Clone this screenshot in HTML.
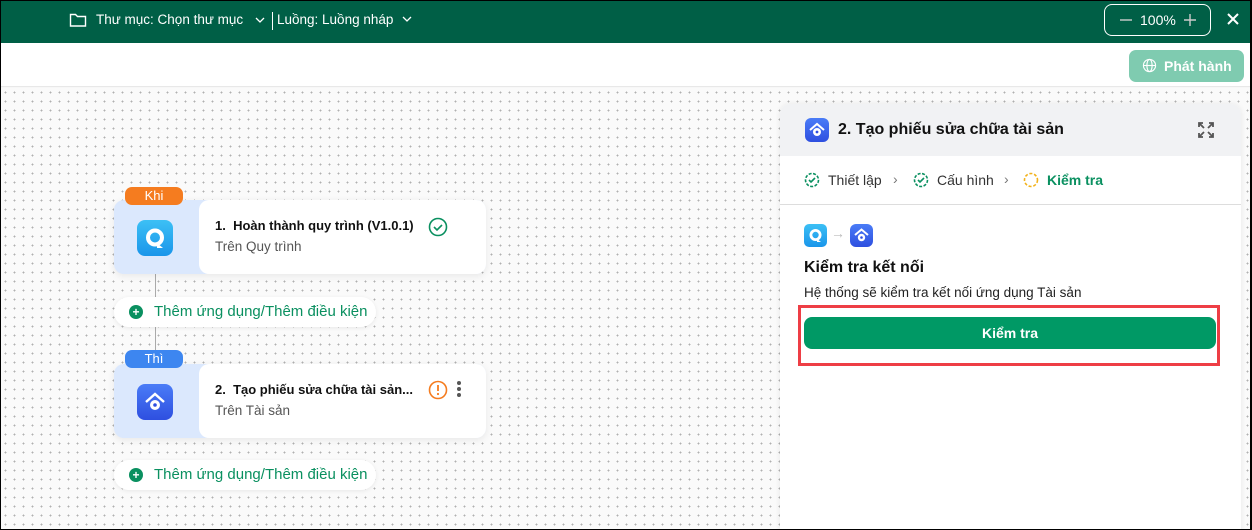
<!DOCTYPE html>
<html><head><meta charset="utf-8"><style>
*{box-sizing:border-box;margin:0;padding:0}
body{width:1252px;height:530px;overflow:hidden;font-family:"Liberation Sans",sans-serif;background:#000;position:relative}
.frame{position:absolute;left:1px;top:1px;width:1249px;height:528px;background:#f7f7f7;overflow:hidden}
.hdr{position:absolute;left:0;top:0;width:100%;height:42px;background:#005f46;color:#fff;font-size:13.5px}
.bar{position:absolute;left:0;top:42px;width:100%;height:44px;background:#fff;border-bottom:1px solid #e8e8e8}
.canvas{position:absolute;left:0;top:87px;width:100%;height:450px;background-color:#fafafa;background-image:radial-gradient(#b0b0b0 0.8px,transparent 1px);background-size:9px 9px}
.abs{position:absolute}
.card{position:absolute;left:113px;width:372px;height:74px;border-radius:10px;background:#dbe8fd;box-shadow:0 2px 8px rgba(0,0,0,.08)}
.card .w{position:absolute;left:85px;top:0;right:0;bottom:0;background:#fff;border-radius:10px}
.tag{position:absolute;left:124px;width:58px;height:18px;border-radius:7px;color:#fff;font-size:13px;text-align:center;line-height:18px}
.add{position:absolute;left:113px;width:262px;height:30px;border-radius:15px;background:#fff;box-shadow:0 1px 4px rgba(0,0,0,.08);color:#0a9060;font-size:15px;line-height:30px;padding-left:40px}
.add i{position:absolute;left:15px;top:8px;width:14px;height:14px;border-radius:50%;background:#0a9060;color:#fff;font-style:normal;font-size:12px;line-height:14px;text-align:center;font-weight:bold}
.t1{font-size:13px;font-weight:bold;color:#111}
.t2{font-size:13.5px;color:#555}
</style></head><body><div class="frame">
<div class="hdr">
<svg class="abs" style="left:68px;top:11px" width="18" height="16" viewBox="0 0 18 16"><path d="M1.5 2.5h5l2 2h8v9.5h-15z" fill="none" stroke="#fff" stroke-width="1.4"/></svg>
<div class="abs" style="left:95px;top:11px">Thư mục: Chọn thư mục</div>
<svg class="abs" style="left:254px;top:16px" width="10" height="7"><path d="M1 1l4 4 4-4" fill="none" stroke="#fff" stroke-width="1.3"/></svg>
<div class="abs" style="left:271px;top:11px;width:1px;height:18px;background:#fff"></div>
<div class="abs" style="left:276px;top:11px">Luồng: Luồng nháp</div>
<svg class="abs" style="left:401px;top:15px" width="10" height="7"><path d="M1 1l4 4 4-4" fill="none" stroke="#fff" stroke-width="1.3"/></svg>
<div class="abs" style="left:1103px;top:3px;width:107px;height:32px;border:1px solid #fff;border-radius:8px"></div>
<svg class="abs" style="left:1119px;top:18px" width="12" height="2"><path d="M0 1h12" stroke="#ccc" stroke-width="1.4"/></svg>
<div class="abs" style="left:1139px;top:11px;font-size:14px">100%</div>
<svg class="abs" style="left:1183px;top:13px" width="12" height="12"><path d="M0 6h12M6 0v12" stroke="#ccc" stroke-width="1.4"/></svg>
<svg class="abs" style="left:1226px;top:12px" width="12" height="12"><path d="M1 1l10 10M11 1L1 11" stroke="#fff" stroke-width="2"/></svg>
</div>
<div class="bar">
<div class="abs" style="left:1128px;top:7px;width:115px;height:32px;border-radius:7px;background:#7fcbb0;color:#fff;font-weight:bold;font-size:14px;line-height:32px;padding-left:35px">Phát hành</div>
<svg class="abs" style="left:1141px;top:15px" width="15" height="15" viewBox="0 0 16 16"><g fill="none" stroke="#fff" stroke-width="1.2"><circle cx="8" cy="8" r="6.5"/><ellipse cx="8" cy="8" rx="2.8" ry="6.5"/><path d="M1.5 8h13"/></g></svg>
</div>
<div class="canvas"></div>
<div class="abs" style="left:154px;top:270px;width:1px;height:100px;background:#aaa"></div>
<div class="card" style="top:199px"><div class="w"></div>
<div class="abs" style="left:23px;top:20px;width:36px;height:36px;border-radius:8px;background:linear-gradient(#3cc0f5,#1a95ea)"><svg class="abs" style="left:7px;top:7px" width="22" height="22"><circle cx="11" cy="10.5" r="7" fill="none" stroke="#fff" stroke-width="4"/><path d="M13 16l6 5h-6z" fill="#fff"/></svg></div>
<div class="abs t1" style="left:101px;top:18px">1.&nbsp; Hoàn thành quy trình (V1.0.1)</div>
<div class="abs t2" style="left:101px;top:39px">Trên Quy trình</div>
<svg class="abs" style="left:314px;top:17px" width="20" height="20"><circle cx="10" cy="10" r="8.5" fill="none" stroke="#0a9060" stroke-width="1.6"/><path d="M6 10l3 3 5-5" fill="none" stroke="#0a9060" stroke-width="1.6"/></svg>
</div>
<div class="tag" style="top:186px;background:#f57c1f">Khi</div>
<div class="add" style="top:296px"><i>+</i>Thêm ứng dụng/Thêm điều kiện</div>
<div class="card" style="top:363px"><div class="w"></div>
<div class="abs" style="left:23px;top:20px;width:36px;height:36px;border-radius:8px;background:linear-gradient(#4a7cf7,#2e4fe0)"><svg class="abs" style="left:6px;top:6px" width="24" height="24"><path d="M3 12L12 4l9 8" fill="none" stroke="#fff" stroke-width="2.4"/><circle cx="12" cy="15" r="5" fill="#fff"/><circle cx="12" cy="15" r="1.8" fill="#2e4fe0"/></svg></div>
<div class="abs t1" style="left:101px;top:18px">2.&nbsp; Tạo phiếu sửa chữa tài sản...</div>
<div class="abs t2" style="left:101px;top:39px">Trên Tài sản</div>
<svg class="abs" style="left:314px;top:16px" width="20" height="20"><circle cx="10" cy="10" r="8.5" fill="none" stroke="#f57c1f" stroke-width="1.6"/><path d="M10 5v6" stroke="#f57c1f" stroke-width="1.8"/><circle cx="10" cy="14" r="1.1" fill="#f57c1f"/></svg>
<div class="abs" style="left:343px;top:17px;width:4px;height:4px;border-radius:50%;background:#555;box-shadow:0 6px 0 #555,0 12px 0 #555"></div>
</div>
<div class="tag" style="top:349px;background:#3d86f0">Thì</div>
<div class="add" style="top:459px"><i>+</i>Thêm ứng dụng/Thêm điều kiện</div>
<div class="abs" style="left:779px;top:103px;width:461px;height:430px;background:#fff;border-radius:10px 10px 0 0;box-shadow:0 0 6px rgba(0,0,0,.08);overflow:hidden">
<div class="abs" style="left:0;top:0;width:100%;height:52px;background:#f1f2f4"></div>
<div class="abs" style="left:25px;top:14px;width:24px;height:24px;border-radius:6px;background:linear-gradient(#4a7cf7,#2e4fe0)"><svg class="abs" style="left:3px;top:3px" width="18" height="18"><path d="M2 9l7-6 7 6" fill="none" stroke="#fff" stroke-width="2"/><circle cx="9" cy="11" r="4" fill="#fff"/><circle cx="9" cy="11" r="1.4" fill="#2e4fe0"/></svg></div>
<div class="abs" style="left:58px;top:17px;font-size:16px;font-weight:bold;color:#111">2. Tạo phiếu sửa chữa tài sản</div>
<svg class="abs" style="left:417px;top:17px" width="18" height="18"><path d="M2 6V2h4M2 2l5 5M16 6V2h-4M16 2l-5 5M2 12v4h4M2 16l5-5M16 12v4h-4M16 16l-5-5" fill="none" stroke="#555" stroke-width="1.8"/></svg>
<svg class="abs" style="left:24px;top:68px" width="16" height="16"><circle cx="8" cy="8" r="6.5" fill="none" stroke="#0a9060" stroke-width="1.6" stroke-dasharray="3 1.5"/><path d="M5 8l2 2 4-4" fill="none" stroke="#0a9060" stroke-width="1.6"/></svg>
<div class="abs" style="left:48px;top:68px;font-size:14px;color:#333">Thiết lập</div>
<div class="abs" style="left:113px;top:67px;font-size:14px;color:#777">›</div>
<svg class="abs" style="left:133px;top:68px" width="16" height="16"><circle cx="8" cy="8" r="6.5" fill="none" stroke="#0a9060" stroke-width="1.6" stroke-dasharray="3 1.5"/><path d="M5 8l2 2 4-4" fill="none" stroke="#0a9060" stroke-width="1.6"/></svg>
<div class="abs" style="left:157px;top:68px;font-size:14px;color:#333">Cấu hình</div>
<div class="abs" style="left:224px;top:67px;font-size:14px;color:#777">›</div>
<svg class="abs" style="left:243px;top:68px" width="16" height="16"><circle cx="8" cy="8" r="6.5" fill="none" stroke="#f2b21b" stroke-width="1.6" stroke-dasharray="3 1.8"/></svg>
<div class="abs" style="left:267px;top:68px;font-size:14px;font-weight:bold;color:#0a9060">Kiểm tra</div>
<div class="abs" style="left:0;top:100px;width:100%;height:1px;background:#ddd"></div>
<div class="abs" style="left:24px;top:120px;width:23px;height:23px;border-radius:5px;background:linear-gradient(#3cc0f5,#1a95ea)"><svg class="abs" style="left:4px;top:4px" width="15" height="15"><circle cx="7.5" cy="7" r="4.6" fill="none" stroke="#fff" stroke-width="2.8"/><path d="M9 11l4 3h-4z" fill="#fff"/></svg></div>
<div class="abs" style="left:51px;top:121px;color:#bbb;font-size:14px">→</div>
<div class="abs" style="left:70px;top:120px;width:23px;height:23px;border-radius:6px;background:linear-gradient(#4a7cf7,#2e4fe0)"><svg class="abs" style="left:3px;top:3px" width="17" height="17"><path d="M2 8l6.5-5.5L15 8" fill="none" stroke="#fff" stroke-width="2"/><circle cx="8.5" cy="10.5" r="3.7" fill="#fff"/><circle cx="8.5" cy="10.5" r="1.3" fill="#2e4fe0"/></svg></div>
<div class="abs" style="left:24px;top:155px;font-size:16px;font-weight:bold;color:#111">Kiểm tra kết nối</div>
<div class="abs" style="left:24px;top:181px;font-size:13.5px;color:#222">Hệ thống sẽ kiểm tra kết nối ứng dụng Tài sản</div>
<div class="abs" style="left:18px;top:201px;width:422px;height:61px;border:3px solid #ee3e45"></div>
<div class="abs" style="left:24px;top:213px;width:412px;height:32px;border-radius:8px;background:#009965;color:#fff;font-weight:bold;font-size:14px;text-align:center;line-height:32px">Kiểm tra</div>
</div>
</div></body></html>
